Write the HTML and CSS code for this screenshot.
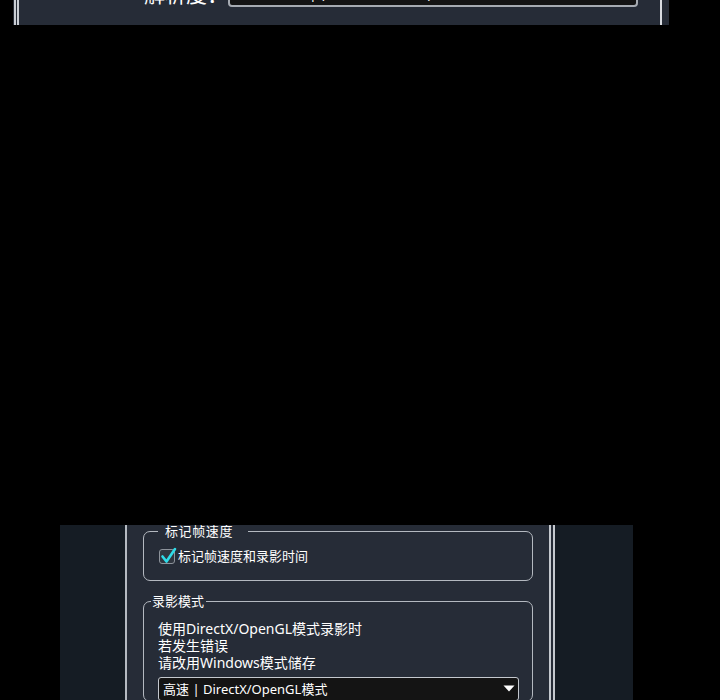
FILE: index.html
```html
<!DOCTYPE html>
<html lang="zh-CN">
<head>
<meta charset="utf-8">
<title>录影设定</title>
<link rel="stylesheet" href="styles.css">
</head>
<body>
<div class="top">
  <div class="top-inner">
    <div class="res-row">
      <span class="res-label">解析度：</span>
      <div class="res-select"><span>1920x1080 | (1920x1080 16:9)</span></div>
    </div>
  </div>
</div>

<div class="bottom">
  <div class="side"></div>
  <div class="main">
    <fieldset class="group group-fps">
      <legend class="legend-fps">标记帧速度</legend>
      <label class="check-row">
        <span class="checkbox">
          <svg class="check" width="18" height="18" viewBox="0 0 18 18"><path d="M3.5 9.5 L7.5 14.5 L16 2" fill="none" stroke="#2fdbe8" stroke-width="2.6" stroke-linecap="round" stroke-linejoin="round"/></svg>
        </span>
        <span class="check-text">标记帧速度和录影时间</span>
      </label>
    </fieldset>
    <fieldset class="group group-mode">
      <legend class="legend-mode">录影模式</legend>
      <p class="desc">使用DirectX/OpenGL模式录影时<br>若发生错误<br>请改用Windows模式储存</p>
      <div class="mode-select">
        <span>高速 | DirectX/OpenGL模式</span>
        <svg class="arrow" width="12" height="7" viewBox="0 0 12 7"><path d="M0.5 0.5 H11.5 L6 6.5 Z" fill="#ffffff"/></svg>
      </div>
    </fieldset>
  </div>
  <div class="side-right"></div>
</div>
</body>
</html>
```

FILE: styles.css
```css
html, body {
  margin: 0;
  padding: 0;
  background: #000;
}
body {
  font-family: "Noto Sans", "Noto Sans CJK SC", sans-serif;
  color: #fff;
  width: 720px;
  height: 700px;
  overflow: hidden;
}
.top {
  margin-left: 13px;
  width: 656px;
  height: 25px;
  background: #262c37;
  overflow: hidden;
}
.top-inner {
  margin-left: 1px;
  width: 648px;
  height: 25px;
  box-sizing: border-box;
  border-left: 5px double #c9cdd3;
  border-right: 2px solid #d8dbe0;
  overflow: hidden;
}
.res-row {
  display: flex;
  align-items: flex-end;
  height: 32px;
  margin-top: -25px;
}
.res-label {
  width: 209px;
  text-align: right;
  font-size: 21px;
  line-height: 22px;
  margin-bottom: 3px;
  font-family: "Noto Sans CJK SC", sans-serif;
}
.res-select {
  width: 410px;
  height: 30px;
  box-sizing: border-box;
  border: 2px solid #a6abb2;
  border-radius: 0 0 4px 4px;
  background: #141414;
  display: flex;
  align-items: flex-end;
  padding: 0 0 3px 4px;
  font-size: 14px;
  line-height: 18px;
}
.bottom {
  margin-top: 500px;
  margin-left: 60px;
  width: 573px;
  height: 175px;
  overflow: hidden;
  display: flex;
  background: #151c24;
}
.side {
  width: 65px;
  flex: none;
}
.main {
  width: 430px;
  flex: none;
  box-sizing: border-box;
  background: #262c37;
  border-left: 2px solid #b5bac1;
  border-right: 6px double #c5c9cf;
  padding: 0 16px;
}
.group {
  margin: 0;
  border: 1px solid #b4b9c0;
  border-radius: 7px;
  padding: 0 13px 0 14px;
  min-width: 0;
}
.group legend {
  font-family: "Noto Sans CJK SC", sans-serif;
  font-size: 13px;
  line-height: 12px;
  color: #fff;
}
.legend-fps {
  padding: 0 15px 0 7px;
  margin-left: 0;
  letter-spacing: 0.6px;
}
.group-fps {
  height: 56px;
  box-sizing: border-box;
}
.check-row {
  display: flex;
  align-items: center;
  margin-top: 11px;
  margin-left: 1px;
  height: 16px;
}
.checkbox {
  position: relative;
  width: 16px;
  height: 15px;
  box-sizing: border-box;
  border: 1.5px solid #8d939b;
  border-radius: 3px;
  background: #30363f;
  flex: none;
}
.check {
  position: absolute;
  left: -1px;
  top: -3px;
}
.check-text {
  margin-left: 3px;
  font-family: "Noto Sans CJK SC", sans-serif;
  font-size: 13px;
  line-height: 16px;
}
.group-mode {
  margin-top: 14px;
}
.legend-mode {
  padding: 0 2px 0 1px;
  margin-left: -7px;
}
.desc {
  margin: 13px 0 0;
  font-size: 14px;
  line-height: 17px;
}
.mode-select {
  margin-top: 6px;
  height: 24px;
  box-sizing: border-box;
  border: 1.5px solid #c4c8ce;
  border-radius: 3px;
  background: #141414;
  display: flex;
  align-items: center;
  justify-content: space-between;
  padding: 0 3px 0 4px;
  font-size: 13px;
  line-height: 18px;
}
.arrow {
  margin-bottom: 1px;
}
.side-right {
  flex: 1;
}
```
